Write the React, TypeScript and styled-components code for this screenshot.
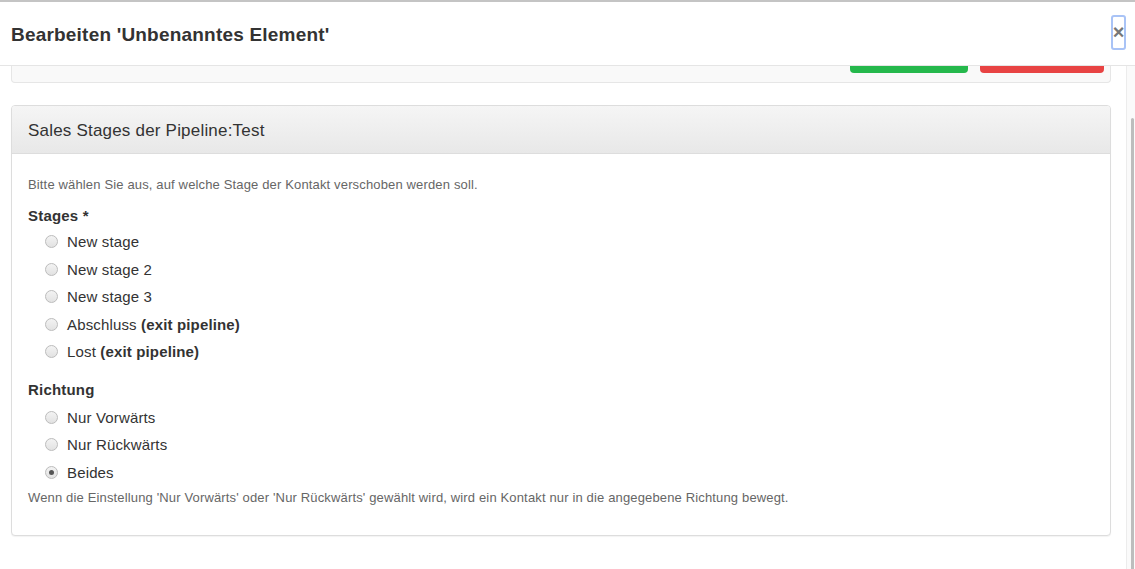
import React from 'react'
import styled, { createGlobalStyle } from 'styled-components'

const GlobalStyle = createGlobalStyle`
    html, body {
        margin: 0;
        padding: 0;
        background: #ffffff;
        font-family: "Liberation Sans", Arial, Helvetica, sans-serif;
        color: #333333;
    }
`

const Modal = styled.div`
    display: flex;
    flex-direction: column;
    width: 1135px;
    height: 569px;
    border-top: 2px solid #c4c4c4;
    box-sizing: border-box;
    overflow: hidden;
    background: #ffffff;
`

const Header = styled.div`
    display: flex;
    align-items: center;
    justify-content: space-between;
    height: 63px;
    padding: 0 9px 0 11px;
    border-bottom: 1px solid #e5e5e5;
    flex-shrink: 0;
`

const Title = styled.h4`
    margin: 0;
    padding-top: 2px;
    font-size: 19px;
    letter-spacing: 0.2px;
    font-weight: bold;
    color: #333333;
`

const CloseButton = styled.button`
    display: flex;
    align-items: center;
    justify-content: center;
    width: 15px;
    height: 35px;
    padding: 0;
    margin-top: -3px;
    border: 2px solid #a9c3f6;
    border-radius: 3px;
    background: transparent;
    color: #777777;
    font-family: "Liberation Sans", Arial, sans-serif;
    font-size: 20px;
    font-weight: bold;
    line-height: 1;
    cursor: pointer;
`

const BodyRow = styled.div`
    display: flex;
    flex: 1;
    min-height: 0;
`

const Content = styled.div`
    flex: 1;
    overflow: hidden;
    padding: 0 15px 0 11px;
`

const ScrollTrack = styled.div`
    display: flex;
    justify-content: flex-end;
    width: 7px;
    padding-right: 1px;
    border-left: 1px solid #ececec;
    background: #fafafa;
`

const ScrollThumb = styled.div`
    width: 3px;
    margin-top: 52px;
    border-radius: 2px 2px 0 0;
    background: #bdbdbd;
`

const ActionPanel = styled.div`
    display: flex;
    justify-content: flex-end;
    align-items: flex-start;
    gap: 12px;
    height: 16px;
    padding-right: 6px;
    background: #f9f9f9;
    border: 1px solid #e6e6e6;
    border-top: none;
    border-radius: 0 0 4px 4px;
    margin-bottom: 22px;
`

const ActionButton = styled.div<{ color: string; width: number }>`
    width: ${p => p.width}px;
    height: 7px;
    background: ${p => p.color};
    border-radius: 0 0 4px 4px;
`

const Panel = styled.div`
    border: 1px solid #dddddd;
    border-radius: 4px;
    background: #ffffff;
    box-shadow: 0 1px 1px rgba(0, 0, 0, 0.05);
`

const PanelHeading = styled.div`
    display: flex;
    align-items: center;
    height: 44px;
    padding: 3px 16px 0 16px;
    background: linear-gradient(to bottom, #f5f5f5 0%, #e8e8e8 100%);
    border-bottom: 1px solid #dddddd;
    border-radius: 3px 3px 0 0;
    font-size: 17px;
    letter-spacing: 0.2px;
    color: #333333;
`

const PanelBody = styled.div`
    padding: 22px 16px 28px 16px;
`

const Hint = styled.p<{ top?: number }>`
    margin: ${p => p.top ?? 0}px 0 0 0;
    font-size: 13px;
    letter-spacing: 0.15px;
    line-height: 18px;
    color: #666666;
`

const GroupLabel = styled.div<{ top: number }>`
    margin-top: ${p => p.top}px;
    font-size: 15px;
    letter-spacing: 0.2px;
    font-weight: bold;
    line-height: 20px;
    color: #333333;
`

const RadioList = styled.div<{ top: number }>`
    display: flex;
    flex-direction: column;
    margin-top: ${p => p.top}px;
    padding-left: 17px;
`

const RadioRow = styled.label`
    display: flex;
    align-items: center;
    gap: 9px;
    height: 27.5px;
    font-size: 15px;
    letter-spacing: 0.15px;
    color: #333333;
`

const RadioCircle = styled.span<{ checked?: boolean }>`
    position: relative;
    width: 11px;
    height: 11px;
    border: 1px solid #bcbcbc;
    border-radius: 50%;
    background: linear-gradient(to bottom, #f3f3f3, #e2e2e2);
    flex-shrink: 0;
    &::after {
        content: '';
        display: ${p => (p.checked ? 'block' : 'none')};
        position: absolute;
        left: 3px;
        top: 3px;
        width: 5px;
        height: 5px;
        border-radius: 50%;
        background: #555555;
    }
`

const Strong = styled.b`
    font-weight: bold;
`

type Option = { label: string; extra?: string; checked?: boolean }

const stages: Option[] = [
    { label: 'New stage' },
    { label: 'New stage 2' },
    { label: 'New stage 3' },
    { label: 'Abschluss', extra: '(exit pipeline)' },
    { label: 'Lost', extra: '(exit pipeline)' },
]

const directions: Option[] = [
    { label: 'Nur Vorwärts' },
    { label: 'Nur Rückwärts' },
    { label: 'Beides', checked: true },
]

const Radios = ({ options, top }: { options: Option[]; top: number }) => (
    <RadioList top={top}>
        {options.map(o => (
            <RadioRow key={o.label}>
                <RadioCircle checked={o.checked} />
                <span>
                    {o.label}
                    {o.extra && <> <Strong>{o.extra}</Strong></>}
                </span>
            </RadioRow>
        ))}
    </RadioList>
)

export default function App() {
    return (
        <>
            <GlobalStyle />
            <Modal>
                <Header>
                    <Title>Bearbeiten 'Unbenanntes Element'</Title>
                    <CloseButton aria-label="Schließen">×</CloseButton>
                </Header>
                <BodyRow>
                    <Content>
                        <ActionPanel>
                            <ActionButton color="#25b84c" width={118} />
                            <ActionButton color="#e84343" width={124} />
                        </ActionPanel>
                        <Panel>
                            <PanelHeading>Sales Stages der Pipeline:Test</PanelHeading>
                            <PanelBody>
                                <Hint>Bitte wählen Sie aus, auf welche Stage der Kontakt verschoben werden soll.</Hint>
                                <GroupLabel top={12}>Stages *</GroupLabel>
                                <Radios options={stages} top={2} />
                                <GroupLabel top={14.5}>Richtung</GroupLabel>
                                <Radios options={directions} top={3.25} />
                                <Hint top={3}>
                                    Wenn die Einstellung 'Nur Vorwärts' oder 'Nur Rückwärts' gewählt wird, wird ein Kontakt nur in die angegebene Richtung bewegt.
                                </Hint>
                            </PanelBody>
                        </Panel>
                    </Content>
                    <ScrollTrack>
                        <ScrollThumb />
                    </ScrollTrack>
                </BodyRow>
            </Modal>
        </>
    )
}
